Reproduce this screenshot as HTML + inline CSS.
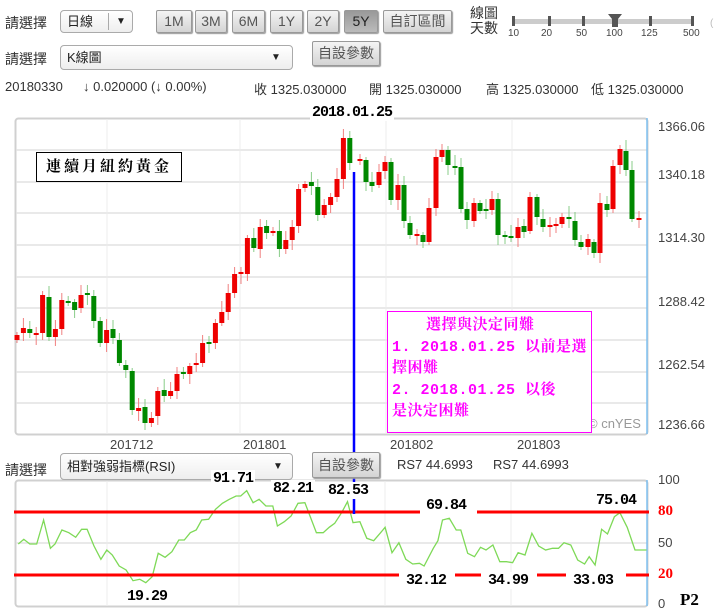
<!DOCTYPE html>
<html><head><meta charset="utf-8">
<style>
*{margin:0;padding:0;box-sizing:border-box}
body{width:720px;height:615px;background:#fff;position:relative;overflow:hidden;font-family:"Liberation Sans","Noto Sans CJK TC",sans-serif;color:#333}
.a{position:absolute;white-space:nowrap}
.t{font-size:14px;color:#333}
.sel{position:absolute;border:1px solid #aaa;border-radius:4px;background:linear-gradient(#fff,#eee);font-size:13px;padding-left:6px;color:#222}
.btn{position:absolute;border:1px solid #999;border-radius:2px;background:linear-gradient(#f4f4f4,#d4d4d4);font-size:14px;color:#555;text-align:center;box-shadow:1px 1px 1px #999}
.lb{position:absolute;background:#fff;font-family:"Liberation Mono","Noto Serif CJK SC",serif;font-weight:bold;font-size:15px;color:#000;white-space:nowrap;line-height:17px;padding:0 2px;letter-spacing:-1px}
.ax{position:absolute;font-size:13px;color:#444}
.mg{font-family:"Liberation Mono","Noto Serif CJK SC",serif;font-weight:bold;color:#f0f;font-size:15px;line-height:21.5px;white-space:nowrap;letter-spacing:0.5px}
</style></head><body>
<div class="a t" style="left:5px;top:13px">請選擇</div>
<div class="sel" style="left:60px;top:10px;width:73px;height:23px;line-height:21px">日線<span style="position:absolute;left:47px;top:2px;height:17px;border-left:1px solid #aaa"></span><span style="position:absolute;left:55px;top:0;font-size:10px">▼</span></div>
<div class="btn" style="left:156px;top:10px;width:36px;height:23px;line-height:21px">1M</div>
<div class="btn" style="left:195px;top:10px;width:32px;height:23px;line-height:21px">3M</div>
<div class="btn" style="left:232px;top:10px;width:33px;height:23px;line-height:21px">6M</div>
<div class="btn" style="left:270px;top:10px;width:33px;height:23px;line-height:21px">1Y</div>
<div class="btn" style="left:307px;top:10px;width:32px;height:23px;line-height:21px">2Y</div>
<div class="btn" style="left:344px;top:10px;width:34px;height:23px;line-height:21px;background:linear-gradient(#999,#bbb);color:#222">5Y</div>
<div class="btn" style="left:383px;top:10px;width:69px;height:23px;line-height:21px">自訂區間</div>
<div class="a" style="left:470px;top:6px;font-size:14px;line-height:15px;color:#333">線圖<br>天數</div>
<div class="a" style="left:513px;top:19px;width:180px;height:5px;background:#ccc"></div>
<div class="a" style="left:512px;top:16px;width:3px;height:10px;background:#555"></div>
<div class="a" style="left:548px;top:16px;width:3px;height:10px;background:#555"></div>
<div class="a" style="left:582px;top:16px;width:3px;height:10px;background:#555"></div>
<div class="a" style="left:649px;top:16px;width:3px;height:10px;background:#555"></div>
<div class="a" style="left:691px;top:16px;width:3px;height:10px;background:#555"></div>
<svg class="a" style="left:608px;top:14px" width="14" height="13"><path d="M0 0H14L10 5V13H4V5Z" fill="#555"/></svg>
<div class="a" style="left:508px;top:28px;font-size:10px;color:#444">10</div>
<div class="a" style="left:541px;top:28px;font-size:10px;color:#444">20</div>
<div class="a" style="left:576px;top:28px;font-size:10px;color:#444">50</div>
<div class="a" style="left:606px;top:28px;font-size:10px;color:#444">100</div>
<div class="a" style="left:641px;top:28px;font-size:10px;color:#444">125</div>
<div class="a" style="left:683px;top:28px;font-size:10px;color:#444">500</div>
<div class="a" style="left:710px;top:18px;font-size:10px;color:#bbb">(</div>

<div class="a t" style="left:5px;top:49px">請選擇</div>
<div class="sel" style="left:60px;top:45px;width:233px;height:25px;line-height:23px">K線圖<span style="position:absolute;left:210px;top:0;font-size:10px">▼</span></div>
<div class="btn" style="left:312px;top:41px;width:68px;height:25px;line-height:23px">自設參數</div>

<div class="a" style="left:5px;top:79px;font-size:13px">20180330</div>
<div class="a" style="left:83px;top:79px;font-size:13px">↓ 0.020000 (↓ 0.00%)</div>
<div class="a" style="left:254px;top:79px;font-size:13px">收 1325.030000</div>
<div class="a" style="left:369px;top:79px;font-size:13px">開 1325.030000</div>
<div class="a" style="left:486px;top:79px;font-size:13px">高 1325.030000</div>
<div class="a" style="left:591px;top:79px;font-size:13px">低 1325.030000</div>

<svg class="a" style="left:0;top:0" width="720" height="615" id="sv"></svg>

<div class="ax" style="left:658px;top:119px">1366.06</div>
<div class="ax" style="left:658px;top:167px">1340.18</div>
<div class="ax" style="left:658px;top:230px">1314.30</div>
<div class="ax" style="left:658px;top:294px">1288.42</div>
<div class="ax" style="left:658px;top:357px">1262.54</div>
<div class="ax" style="left:658px;top:417px">1236.66</div>
<div class="a" style="left:588px;top:416px;font-size:13px;color:#999">© cnYES</div>

<div class="a" style="left:36px;top:152px;width:146px;height:30px;border:1px solid #000;background:#fff;font-family:'Liberation Serif','Noto Serif CJK SC',serif;font-weight:bold;font-size:15px;line-height:28px;text-align:center;color:#000;letter-spacing:3px">連續月紐約黃金</div>
<div class="a" style="left:387px;top:311px;width:205px;height:122px;border:1px solid #f0f;background:#fff;padding:3px 0 0 4px">
<div class="mg" style="padding-left:34px">選擇與決定同難</div>
<div class="mg">1. 2018.01.25 以前是選</div>
<div class="mg">擇困難</div>
<div class="mg">2. 2018.01.25 以後</div>
<div class="mg">是決定困難</div>
</div>

<div class="ax" style="left:110px;top:437px">201712</div>
<div class="ax" style="left:243px;top:437px">201801</div>
<div class="ax" style="left:390px;top:437px">201802</div>
<div class="ax" style="left:517px;top:437px">201803</div>

<div class="a t" style="left:5px;top:460px">請選擇</div>
<div class="sel" style="left:60px;top:453px;width:233px;height:27px;line-height:25px">相對強弱指標(RSI)<span style="position:absolute;left:212px;top:0;font-size:10px">▼</span></div>
<div class="btn" style="left:312px;top:452px;width:68px;height:26px;line-height:24px">自設參數</div>
<div class="a" style="left:397px;top:457px;font-size:13px">RS7 44.6993</div>
<div class="a" style="left:493px;top:457px;font-size:13px">RS7 44.6993</div>
<div class="ax" style="left:658px;top:472px">100</div>
<div class="ax" style="left:658px;top:535px">50</div>
<div class="ax" style="left:658px;top:596px">0</div>
<div class="a" style="left:658px;top:503px;font-family:'Liberation Serif',serif;font-weight:bold;color:#f00;font-size:15px">80</div>
<div class="a" style="left:658px;top:566px;font-family:'Liberation Serif',serif;font-weight:bold;color:#f00;font-size:15px">20</div>
<div class="a" style="left:680px;top:590px;font-family:'Liberation Serif',serif;font-weight:bold;color:#000;font-size:17px">P2</div>

<div class="lb" style="left:310px;top:104px">2018.01.25</div>
<div class="lb" style="left:211px;top:470px">91.71</div>
<div class="lb" style="left:271px;top:480px">82.21</div>
<div class="lb" style="left:326px;top:482px">82.53</div>
<div class="lb" style="left:424px;top:497px">69.84</div>
<div class="lb" style="left:594px;top:492px">75.04</div>
<div class="lb" style="left:125px;top:588px">19.29</div>
<div class="lb" style="left:404px;top:572px">32.12</div>
<div class="lb" style="left:486px;top:572px">34.99</div>
<div class="lb" style="left:571px;top:572px">33.03</div>

<script>
var s='';
s+='<rect x="15.5" y="118.5" width="632" height="316" rx="3" fill="none" stroke="#d0d0d0" stroke-width="2"/>';
[150,182,213,245,277,308,340,372,403].forEach(function(y){s+='<line x1="16" x2="647" y1="'+y+'" y2="'+y+'" stroke="#e2e2e2" stroke-width="1.5"/>';});
[107,240,386,512].forEach(function(x){s+='<line x1="'+x+'" x2="'+x+'" y1="119" y2="434" stroke="#ececec"/>';});
s+='<line x1="647" x2="647" y1="118" y2="434" stroke="#7fc0f0" stroke-width="1.5"/>';
var A=[['r',335,340],['r',328,333],['g',329,333],['r',333,335],['r',295,333],['g',297,337],['r',329,337],['r',300,329],['g',301,303],['g',302,310],['r',295,308],['g',293,295],['g',296,321],['g',321,343],['r',330,343],['g',329,338],['g',340,363],['g',365,370],['g',371,410],['r',408,411],['g',407,423],['r',418,423],['r',391,416],['g',390,396],['r',391,396],['r',374,391],['g',372,374],['r',366,374],['r',363,365],['r',343,363],['g',342,344],['r',323,343],['r',312,323],['r',293,312],['r',274,293],['r',272,274],['r',238,274],['g',238,248],['r',227,249],['g',226,233],['r',231,233],['g',231,249],['r',240,249],['r',227,240],['r',189,226],['r',184,188],['g',182,186],['g',187,215],['r',205,215],['r',197,205],['r',179,197],['r',138,179],['g',138,163]];
var B=[[360,'r',159,161],[366,'g',160,182],[372,'g',182,186],[379,'r',172,185],[385,'r',162,171],[391,'g',162,200],[398,'r',185,200],[404,'g',185,221],[410,'g',223,235],[417,'r',234,236],[423,'g',235,242],[429,'r',208,242],[436,'r',157,208],[442,'r',150,157],[448,'g',150,165],[455,'g',166,168],[461,'g',167,209],[467,'g',209,220],[474,'r',203,221],[480,'g',203,211],[486,'g',209,211],[492,'r',199,210],[498,'g',199,235],[505,'g',235,237],[511,'g',236,238],[518,'r',227,238],[524,'g',226,232],[530,'r',197,231],[537,'g',197,217],[543,'g',219,227],[550,'r',225,227],[556,'r',224,226],[562,'r',217,224],[569,'g',217,219],[575,'g',221,240],[581,'g',242,247],[588,'r',239,247],[594,'g',242,253],[600,'r',203,253],[607,'g',204,210],[613,'r',166,209],[620,'r',149,165],[626,'g',151,170],[632,'g',170,219],[639,'r',218,220]];
var C=[];A.forEach(function(c,i){C.push([17+i*6.4,c[0],c[1],c[2]]);});B.forEach(function(c){C.push(c);});
C.forEach(function(c,i){var col=c[1]=='r'?'#e00':'#080',wc=c[1]=='r'?'#f08080':'#8c8';var u=3+((i*7)%9),d=3+((i*5)%8);
s+='<line x1="'+c[0]+'" x2="'+c[0]+'" y1="'+(c[2]-u)+'" y2="'+(c[3]+d)+'" stroke="'+wc+'"/>';
s+='<rect x="'+(c[0]-2.5)+'" y="'+c[2]+'" width="5" height="'+Math.max(2,c[3]-c[2])+'" fill="'+col+'"/>';});
s+='<rect x="15.5" y="480.5" width="632" height="126" rx="3" fill="none" stroke="#d0d0d0" stroke-width="2"/>';
s+='<line x1="16" x2="647" y1="543" y2="543" stroke="#e2e2e2" stroke-width="1.5"/>';
[107,239,385,511].forEach(function(x){s+='<line x1="'+x+'" x2="'+x+'" y1="481" y2="606" stroke="#ececec"/>';});
s+='<line x1="647" x2="647" y1="480" y2="606" stroke="#7fc0f0" stroke-width="1.5"/>';
var P=[[40,312],[52,298],[65,312],[80,312],[95,240],[110,325],[120,312],[135,270],[150,278],[165,292],[178,268],[190,268],[205,318],[220,358],[233,330],[245,345],[260,378],[275,390],[290,422],[305,418],[318,428],[332,410],[345,340],[360,352],[375,335],[390,300],[402,300],[415,278],[428,270],[440,240],[455,238],[470,208],[485,190],[500,178],[515,168],[525,168],[538,152],[552,188],[565,178],[580,198],[595,198],[605,258],[620,245],[635,228],[650,190],[665,188],[690,278],[705,278],[718,262],[730,250],[745,218],[758,185],[770,248],[785,245],[800,295],[815,302],[830,278],[840,262],[855,338],[870,308],[885,358],[900,372],[915,370],[925,378],[945,325],[955,302],[965,240],[980,235],[995,270],[1005,270],[1020,340],[1035,350],[1048,322],[1060,330],[1075,315],[1090,365],[1105,365],[1118,368],[1130,338],[1145,345],[1160,280],[1175,318],[1190,330],[1205,325],[1218,325],[1230,308],[1245,315],[1260,360],[1275,372],[1285,350],[1298,375],[1312,268],[1325,282],[1340,230],[1352,218],[1368,262],[1385,330],[1410,330]];
s+='<polyline fill="none" stroke="#7ed957" stroke-width="1.3" points="'+P.map(function(p){return (p[0]*0.4585).toFixed(1)+','+(p[1]/3+440).toFixed(1);}).join(' ')+'"/>';
function L(x1,x2,y){s+='<line x1="'+x1+'" x2="'+x2+'" y1="'+y+'" y2="'+y+'" stroke="#f00" stroke-width="3"/>';}
L(14,420,512);L(477,649,512);L(14,399,575);L(455,481,575);L(537,566,575);L(626,649,575);
s+='<line x1="354" x2="354" y1="172" y2="514" stroke="#00f" stroke-width="2.5"/>';
document.getElementById('sv').innerHTML=s;
</script>
</body></html>
